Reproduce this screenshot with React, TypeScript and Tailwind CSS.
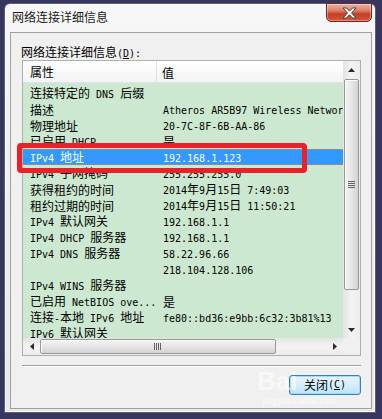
import React from "react";

const cjkRe = /([\u2e80-\u9fff\u3000-\u303f\uff00-\uffef]+)/;

// SimSun-ish mix: CJK at 12px, Latin as 6px-wide mono
function Txt({ s }: { s: string }) {
	return (
		<>
			{s
				.split(cjkRe)
				.filter(Boolean)
				.map((p, i) =>
					cjkRe.test(p) ? (
						<span key={i} className="text-[12px] font-['Noto_Sans_CJK_SC',sans-serif]">
							{p}
						</span>
					) : (
						<span key={i} className="text-[10px] font-['DejaVu_Sans_Mono','Noto_Sans_CJK_SC',monospace]">
							{p}
						</span>
					)
				)}
		</>
	);
}

const rows: [string, string][] = [
	["连接特定的 DNS 后缀", ""],
	["描述", "Atheros AR5B97 Wireless Network Adapter"],
	["物理地址", "20-7C-8F-6B-AA-86"],
	["已启用 DHCP", "是"],
	["IPv4 地址", "192.168.1.123"],
	["IPv4 子网掩码", "255.255.255.0"],
	["获得租约的时间", "2014年9月15日 7:49:03"],
	["租约过期的时间", "2014年9月15日 11:50:21"],
	["IPv4 默认网关", "192.168.1.1"],
	["IPv4 DHCP 服务器", "192.168.1.1"],
	["IPv4 DNS 服务器", "58.22.96.66"],
	["", "218.104.128.106"],
	["IPv4 WINS 服务器", ""],
	["已启用 NetBIOS ove...", "是"],
	["连接-本地 IPv6 地址", "fe80::bd36:e9bb:6c32:3b81%13"],
	["IPv6 默认网关", ""],
];

function Arrow({ dir }: { dir: "up" | "down" | "left" | "right" }) {
	const vert = dir === "up" || dir === "down";
	const pts = {
		up: "0,4 3.5,0 7,4",
		down: "0,0 3.5,4 7,0",
		left: "4,0 0,3.5 4,7",
		right: "0,0 4,3.5 0,7",
	}[dir];
	return (
		<div className="w-[17px] h-[17px] shrink-0 flex items-center justify-center">
			<svg width={vert ? 7 : 4} height={vert ? 4 : 7} viewBox={vert ? "0 0 7 4" : "0 0 4 7"}>
				<polygon points={pts} fill="#2a2a2a" />
			</svg>
		</div>
	);
}

function VScroll() {
	return (
		<div className="w-[17px] h-full flex flex-col bg-gradient-to-r from-[#e4e4e4] via-[#f3f3f3] to-[#ececec]">
			<Arrow dir="up" />
			<div className="mx-[1px] mt-[1px] h-[211px] rounded-[2px] border border-[#979797] bg-gradient-to-r from-[#f4f4f4] via-[#e6e6e6] to-[#d3d3d3] shadow-[inset_1px_1px_0_#fff] flex items-center justify-center">
				<div className="flex flex-col">
					{[0, 1, 2, 3].map((i) => (
						<div key={i} className="w-[7px] h-[2px] border-t border-[#626262] border-b-[#fafafa]" />
					))}
				</div>
			</div>
			<div className="flex-1" />
			<Arrow dir="down" />
		</div>
	);
}

function HScroll() {
	return (
		<div className="h-[17px] flex flex-row bg-gradient-to-b from-[#e4e4e4] via-[#f3f3f3] to-[#ececec]">
			<Arrow dir="left" />
			<div className="my-[1px] w-[236px] rounded-[2px] border border-[#979797] bg-gradient-to-b from-[#f4f4f4] via-[#e6e6e6] to-[#d3d3d3] shadow-[inset_1px_1px_0_#fff] flex items-center justify-center">
				<div className="flex flex-row">
					{[0, 1, 2, 3].map((i) => (
						<div key={i} className="h-[7px] w-[2px] border-l border-[#626262]" />
					))}
				</div>
			</div>
			<div className="flex-1" />
			<Arrow dir="right" />
		</div>
	);
}

export default function App() {
	return (
		<div className="relative w-[382px] h-[419px] bg-[#37365f] pt-[3px] pl-[4px] pr-[6px] pb-[6px] overflow-hidden">
			{/* Window */}
			<div className="h-full flex flex-col rounded-t-[6px] border border-[#5d5c78] bg-gradient-to-b from-[#f7f7f7] via-[#eeeeee] to-[#e9e9e9] shadow-[inset_0_0_0_1px_rgba(255,255,255,0.7)]">
				{/* Title bar */}
				<div className="h-[28px] flex flex-row items-start justify-between pl-[7px] pr-[3px]">
					<span className="mt-[5px] leading-[16px] text-[12px] text-[#1a1a1a] font-['Noto_Sans_CJK_SC',sans-serif]">
						网络连接详细信息
					</span>
					<div className="-mt-[1px] w-[46px] h-[19px] rounded-b-[5px] border border-[#6c2a1e] bg-[linear-gradient(to_bottom,#ebb4a6_0%,#dd7d66_40%,#c43f25_58%,#d0573a_100%)] shadow-[inset_0_0_0_1px_rgba(255,255,255,0.35)] flex items-center justify-center">
						<svg width="15" height="12" viewBox="0 0 15 12">
							<path
								d="M1 1h3.5L7.5 4.2L10.5 1H14L9.5 6L14 11h-3.5L7.5 7.8L4.5 11H1L5.5 6Z"
								fill="#fff"
								stroke="#3a3a3a"
								strokeWidth="0.9"
								strokeLinejoin="round"
							/>
						</svg>
					</div>
				</div>

				{/* Client panel */}
				<div className="flex-1 ml-[5px] mr-[3px] mb-[3px] border border-[#a0a0a0] bg-[#f0f0f0] pt-[10px] pl-[11px] pr-[10px] flex flex-col">
					<div className="h-[16px] leading-[16px] whitespace-pre text-black -ml-[1px]">
						<Txt s="网络连接详细信息" />
						<span className="text-[10px] font-['DejaVu_Sans_Mono',monospace]">
							(<span className="underline">D</span>):
						</span>
					</div>

					{/* List */}
					<div className="mt-[1px] h-[296px] border border-[#a9b4a9] flex flex-col">
						<div className="h-[277px] flex flex-row">
							<div className="flex-1 min-w-0 flex flex-col">
								<div className="h-[22px] shrink-0 flex flex-row items-center bg-gradient-to-b from-[#ffffff] to-[#f3f4f5] border-b border-[#e2e3e4] text-black">
									<div className="w-[134px] h-full pl-[7px] flex items-center border-r border-[#dfe0e1]">
										<Txt s="属性" />
									</div>
									<div className="pl-[5px]">
										<Txt s="值" />
									</div>
								</div>
								<div className="flex-1 min-h-0 overflow-hidden bg-[#cde8d0] pt-[2px]">
									{rows.map(([k, v], i) => {
										const sel = i === 4;
										return (
											<div
												key={i}
												className={
													sel
														? "h-[16px] flex flex-row items-center bg-[#3399ff] text-white border-y border-dotted border-[#e0822e]"
														: "h-[16px] flex flex-row items-center text-black"
												}
											>
												<div className="w-[134px] shrink-0 pl-[7px] overflow-hidden whitespace-pre leading-[16px]">
													<Txt s={k} />
												</div>
												<div className="flex-1 min-w-0 pl-[6px] overflow-hidden whitespace-pre leading-[16px]">
													<Txt s={v} />
												</div>
											</div>
										);
									})}
								</div>
							</div>
							<VScroll />
						</div>
						<div className="h-[17px] flex flex-row">
							<div className="flex-1 min-w-0">
								<HScroll />
							</div>
							<div className="w-[17px] h-full bg-[#f0f0f0]" />
						</div>
					</div>

					{/* Separator */}
					<div className="mt-[9px] h-[2px] border-t border-[#a0a0a0] border-b-[#ffffff] border-b" />

					{/* Close button */}
					<div className="mt-[8px] flex flex-row justify-end">
						<div className="w-[72px] h-[20px] rounded-[3px] border border-[#3c7fb1] bg-gradient-to-b from-[#e8f5fd] via-[#d6eefc] to-[#b9e2fb] shadow-[inset_0_0_0_1px_#9ddcfa] flex items-center justify-center text-black leading-[16px] whitespace-pre">
							<Txt s="关闭" />
							<span className="text-[10px] font-['DejaVu_Sans_Mono',monospace]">
								(<span className="underline">C</span>)
							</span>
						</div>
					</div>
				</div>
			</div>

			{/* Red annotation box */}
			<div className="absolute left-[17px] top-[143px] w-[290px] h-[30px] border-[5px] border-[#e8212b] rounded-[4px]" />

			{/* Baidu watermark */}
			<div className="absolute left-[257px] top-[368px] text-[26px] font-bold leading-[26px] text-white/60 font-['Liberation_Sans',sans-serif]">
				Bai
			</div>
			<div className="absolute left-[262px] top-[395px] text-[10px] leading-[12px] text-white/70 font-['Liberation_Serif',serif]">
				jingyan.baidu.com
			</div>
		</div>
	);
}
